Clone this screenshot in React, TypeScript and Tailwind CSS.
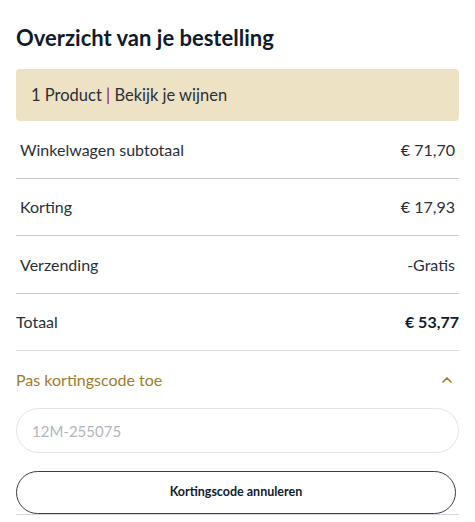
import { ChevronUp } from "lucide-react";

const rows = [
  { label: "Winkelwagen subtotaal", value: "€ 71,70", h: "h-[57px]" },
  { label: "Korting", value: "€ 17,93", h: "h-[57px]" },
  { label: "Verzending", value: "-Gratis", h: "h-[58px]" },
];

export default function App() {
  return (
    <div className="min-h-screen bg-white px-4 pt-6 font-['Lato','Noto_Sans',sans-serif] text-[#2b2f38]">
      <h2 className="text-[22px] font-bold leading-7 text-[#101b2e]">Overzicht van je bestelling</h2>

      <div className="mt-[17px] flex h-[52px] items-center rounded bg-[#ede3c4] px-[15px] text-[16.5px]">
        1 Product&nbsp;<span className="text-[#8b1a2b]">|</span>&nbsp;Bekijk je wijnen
      </div>

      <div className="h-px" />

      {rows.map((r) => (
        <div
          key={r.label}
          className={`flex ${r.h} items-center justify-between border-b border-[#c5c9d3] px-1 text-[16px]`}
        >
          <span>{r.label}</span>
          <span>{r.value}</span>
        </div>
      ))}

      <div className="flex h-[57px] items-center justify-between border-b border-[#d9dbe0] text-[16px]">
        <span>Totaal</span>
        <span className="font-bold text-[#101b2e]">€ 53,77</span>
      </div>

      <button className="flex h-[57px] w-full items-center justify-between text-[16px] text-[#a17c2b]">
        <span>Pas kortingscode toe</span>
        <ChevronUp className="mr-1 h-4 w-4" strokeWidth={2.5} />
      </button>

      <input
        placeholder="12M-255075"
        className="block h-[45px] w-full rounded-full border border-[#e3e4e8] px-[15px] text-[15px] outline-none placeholder:text-[#b3b5ba]"
      />

      <div className="border-b border-[#d4d7dd] pt-[18px]">
        <button className="flex h-[43px] w-[440px] items-center justify-center rounded-full border border-[#3a3d44] text-[12.5px] font-bold text-[#101b2e]">
          Kortingscode annuleren
        </button>
      </div>
    </div>
  );
}
